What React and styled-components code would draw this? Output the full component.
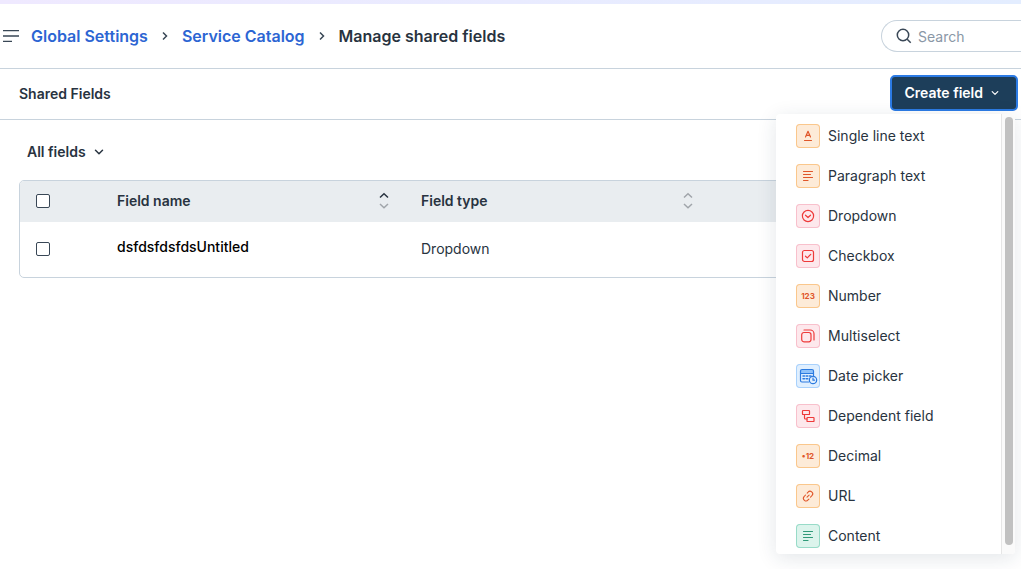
import React, { useState } from 'react';
import styled, { createGlobalStyle } from 'styled-components';

const GlobalStyle = createGlobalStyle`
  * {
    box-sizing: border-box;
  }

  body {
    margin: 0;
    min-height: 100vh;
    background: #fff;
    color: #283340;
    font-family: Inter, 'Liberation Sans', sans-serif;
    font-size: 14px;
    line-height: 20px;
    overflow-x: hidden;
  }

  button, input {
    font: inherit;
    color: inherit;
  }
`;

const tones = {
  orange: { background: '#fdebd8', border: '#fac78c', color: '#e0562a' },
  red: { background: '#fde8ec', border: '#f8c0cc', color: '#ee3a3a' },
  blue: { background: '#e0effe', border: '#a8d1fc', color: '#2c7be0' },
  green: { background: '#dcf4ec', border: '#98dbc8', color: '#2f9a78' },
};

const ParagraphLines = () => (
  <path d="M7.5 7.5h9M7.5 10.5h7M7.5 13.5h9M7.5 16.5h4.5" />
);

const fieldTypes = [
  {
    label: 'Single line text',
    tone: 'orange',
    icon: <path d="M9.5 13 12 7.3l2.5 5.7M10.3 11.3h3.4M8.5 16.5h7" />,
  },
  { label: 'Paragraph text', tone: 'orange', icon: <ParagraphLines /> },
  {
    label: 'Dropdown',
    tone: 'red',
    icon: (
      <>
        <circle cx="12" cy="12" r="5.6" />
        <path d="m9.5 11.2 2.5 2.3 2.5-2.3" />
      </>
    ),
  },
  {
    label: 'Checkbox',
    tone: 'red',
    icon: (
      <>
        <rect x="6.5" y="6.5" width="11" height="11" rx="2" />
        <path d="m9.5 12.2 1.8 1.7 3.4-3.6" />
      </>
    ),
  },
  { label: 'Number', tone: 'orange', text: '123' },
  {
    label: 'Multiselect',
    tone: 'red',
    icon: (
      <>
        <rect x="5.7" y="8.5" width="9.3" height="9.3" rx="2.2" />
        <path d="M8 6h6.2a3.8 3.8 0 0 1 3.8 3.8V16" />
      </>
    ),
  },
  {
    label: 'Date picker',
    tone: 'blue',
    icon: (
      <>
        <path d="M4.5 6h13v3h-13z" fill="#8fc2fa" stroke="none" />
        <path d="M12.5 18H6a1.5 1.5 0 0 1-1.5-1.5V7A1.5 1.5 0 0 1 6 5.5h10A1.5 1.5 0 0 1 17.500 7v5M4.500 9.500h13" />
        <path d="M7 12h1.500M10.200 12h1.600M13.500 12H15M7 14.700h1.500M10.200 14.700h1.600" strokeWidth="1.5" />
        <circle cx="17" cy="16" r="3.7" fill="#e0effe" />
        <path d="M17 14v2.200h1.600" />
      </>
    ),
  },
  {
    label: 'Dependent field',
    tone: 'red',
    icon: (
      <>
        <rect x="6.5" y="6.5" width="7" height="4" rx="0.6" />
        <rect x="11" y="13.5" width="7" height="4" rx="0.6" />
        <path d="M8.5 10.5V14a1 1 0 0 0 1 1H11" />
      </>
    ),
  },
  { label: 'Decimal', tone: 'orange', text: '•12' },
  {
    label: 'URL',
    tone: 'orange',
    icon: (
      <g transform="translate(1.5 1.5) scale(0.88)">
        <path d="m11 8.600 1-1a2.900 2.900 0 0 1 4.600 3.700l-1.800 1.900" />
        <path d="m13 15.400-1 1a2.900 2.900 0 0 1-4.600-3.700l1.800-1.900" />
        <path d="m10.800 13.200 2.400-2.400" />
      </g>
    ),
  },
  { label: 'Content', tone: 'green', icon: <ParagraphLines /> },
];

const rows = [{ id: 1, name: 'dsfdsfdsfdsUntitled', type: 'Dropdown' }];

const ChevronRight = () => (
  <svg width="6" height="10" viewBox="0 0 6 10" fill="none" stroke="#394756" strokeWidth="1.5">
    <path d="m1 1.5 3.5 3.5L1 8.5" />
  </svg>
);

const ChevronDown = ({ size = 10 }) => (
  <svg width={size} height={size} viewBox="0 0 10 10" fill="none" stroke="currentColor" strokeWidth="1.5" strokeLinecap="round" strokeLinejoin="round">
    <path d="M1.5 3.3 5 6.7l3.5-3.4" />
  </svg>
);

const SortIcon = ({ ascending }) => (
  <svg width="10" height="18" viewBox="0 0 10 18" fill="none" strokeWidth="1.5">
    <path d="m1 5.5 4-3.7 4 3.7" stroke={ascending ? '#283340' : '#a0a5aa'} />
    <path d="m1 12 4 3.700 4-3.700" stroke="#a0a5aa" />
  </svg>
);

const App = () => {
  const [isOpen, setIsOpen] = useState(true);

  return (
    <>
      <GlobalStyle />
      <TopStrip />
      <Header>
        <MenuButton type="button" aria-label="Menu">
          <svg width="16" height="12" viewBox="0 0 16 12" fill="none" stroke="#394756" strokeWidth="1.3">
            <path d="M0 .7h16M0 6h16M0 11.300h9" />
          </svg>
        </MenuButton>
        <Breadcrumb aria-label="Breadcrumb">
          <a href="#settings">Global Settings</a>
          <ChevronRight />
          <a href="#catalog">Service Catalog</a>
          <ChevronRight />
          <span>Manage shared fields</span>
        </Breadcrumb>
        <SearchBox>
          <svg width="16" height="16" viewBox="0 0 16 16" fill="none" stroke="#394756" strokeWidth="1.5">
            <circle cx="7" cy="7" r="5.7" />
            <path d="m11.2 11.2 3.5 3.5" />
          </svg>
          <input type="search" placeholder="Search" aria-label="Search" />
        </SearchBox>
      </Header>

      <Toolbar>
        <Title>Shared Fields</Title>
        <CreateWrapper>
          <CreateButton type="button" aria-expanded={isOpen} onClick={() => setIsOpen(!isOpen)}>
            Create field
            <ChevronDown size={8} />
          </CreateButton>
          {isOpen && (
            <Menu>
              <MenuList>
                {fieldTypes.map(({ label, tone, icon, text }) => (
                  <li key={label}>
                    <MenuItem type="button">
                      <FieldIcon $tone={tones[tone]} aria-hidden="true">
                        {text ? (
                          <text x="12" y="15" textAnchor="middle">
                            {text}
                          </text>
                        ) : (
                          icon
                        )}
                      </FieldIcon>
                      {label}
                    </MenuItem>
                  </li>
                ))}
              </MenuList>
              <ScrollTrack>
                <ScrollThumb />
              </ScrollTrack>
            </Menu>
          )}
        </CreateWrapper>
      </Toolbar>

      <Main>
        <FilterButton type="button">
          All fields
          <ChevronDown />
        </FilterButton>
        <TableFrame>
          <Table>
            <colgroup>
              <SelectCol />
              <FieldCol />
              <FieldCol />
              <col />
            </colgroup>
            <thead>
              <tr>
                <th>
                  <Checkbox type="checkbox" aria-label="Select all fields" />
                </th>
                <th>
                  <SortButton type="button">
                    Field name
                    <SortIcon ascending />
                  </SortButton>
                </th>
                <th>
                  <SortButton type="button">
                    Field type
                    <SortIcon />
                  </SortButton>
                </th>
                <th />
              </tr>
            </thead>
            <tbody>
              {rows.map((row) => (
                <tr key={row.id}>
                  <td>
                    <Checkbox type="checkbox" aria-label={`Select ${row.name}`} />
                  </td>
                  <td>
                    <FieldName>{row.name}</FieldName>
                  </td>
                  <td>{row.type}</td>
                  <td />
                </tr>
              ))}
            </tbody>
          </Table>
        </TableFrame>
      </Main>
    </>
  );
};

const TopStrip = styled.div`
  height: 4px;
  background: linear-gradient(90deg, #efe9ff, #e3edff);
`;

const Header = styled.header`
  display: flex;
  align-items: center;
  height: 65px;
  padding-left: 3px;
  border-bottom: 1px solid #c8d3dd;
`;

const MenuButton = styled.button`
  display: flex;
  padding: 0;
  border: 0;
  background: none;
`;

const Breadcrumb = styled.nav`
  display: flex;
  flex: 1;
  align-items: center;
  gap: 14px;
  margin-left: 12px;
  font-size: 16px;
  font-weight: 600;
  white-space: nowrap;

  & a {
    color: #2c65d3;
    text-decoration: none;
  }
`;

const SearchBox = styled.label`
  display: flex;
  align-items: center;
  gap: 6px;
  width: 140px;
  height: 32px;
  padding-left: 14px;
  border: 1px solid #c8d3dd;
  border-right: 0;
  border-radius: 16px 0 0 16px;

  & svg {
    flex-shrink: 0;
  }

  & input {
    width: 100%;
    min-width: 0;
    padding: 2px 0 0;
    border: 0;
    outline: 0;
    background: none;
  }

  & input::placeholder {
    color: #8a97a6;
  }
`;

const Toolbar = styled.div`
  display: flex;
  align-items: center;
  justify-content: space-between;
  height: 51px;
  padding: 0 3px 0 19px;
  border-bottom: 1px solid #c8d3dd;
`;

const Title = styled.h1`
  margin: 0;
  font-size: 14px;
  font-weight: 600;
`;

const CreateWrapper = styled.div`
  position: relative;
  margin-bottom: 2px;
`;

const CreateButton = styled.button`
  display: flex;
  align-items: center;
  gap: 8px;
  height: 36px;
  padding: 0 17px 0 13px;
  border: 2px solid #2c7be5;
  border-radius: 5px;
  background: #1d3e5a;
  color: #fff;
  font-weight: 600;
`;

const Menu = styled.div`
  position: absolute;
  top: 39px;
  right: 3px;
  display: flex;
  width: 239px;
  height: 440px;
  border-radius: 4px;
  background: #fff;
  box-shadow: 0 4px 20px rgba(24, 50, 71, 0.12);
  overflow: hidden;
`;

const MenuList = styled.ul`
  flex: 1;
  margin: 0;
  padding: 2px 0 0;
  list-style: none;
`;

const MenuItem = styled.button`
  display: flex;
  align-items: center;
  gap: 8px;
  width: 100%;
  height: 40px;
  padding: 0 20px;
  border: 0;
  background: none;
  text-align: left;

  &:hover {
    background: #f5f7f9;
  }
`;

const FieldIcon = styled.svg.attrs({ viewBox: '0 0 24 24' })`
  width: 24px;
  height: 24px;
  border-radius: 4px;
  background: ${({ $tone }) => $tone.background};
  box-shadow: inset 0 0 0 1px ${({ $tone }) => $tone.border};
  fill: none;
  stroke: ${({ $tone }) => $tone.color};
  stroke-width: 1.2;
  stroke-linecap: round;
  stroke-linejoin: round;

  & text {
    fill: ${({ $tone }) => $tone.color};
    stroke: none;
    font-size: 8px;
    font-weight: 700;
  }
`;

const ScrollTrack = styled.div`
  width: 14px;
  padding: 3px 2px 9px 3px;
  border-left: 1px solid #e6e6e6;
  background: #fafafa;
`;

const ScrollThumb = styled.div`
  height: 100%;
  border-radius: 4px;
  background: #c1c1c1;
`;

const Main = styled.main`
  padding: 20px 20px 0 19px;
`;

const FilterButton = styled.button`
  display: flex;
  align-items: center;
  gap: 8px;
  height: 24px;
  margin-bottom: 16px;
  padding: 0 8px;
  border: 0;
  background: none;
  font-weight: 600;
`;

const TableFrame = styled.div`
  border: 1px solid #c8d3dd;
  border-radius: 5px;
  overflow: hidden;
`;

const Table = styled.table`
  width: 100%;
  table-layout: fixed;
  border-collapse: collapse;
  text-align: left;

  & th {
    height: 41px;
    padding: 0 16px 2px;
    background: #e9edf0;
  }

  & td {
    height: 55px;
    padding: 0 16px 2px;
  }
`;

const SelectCol = styled.col`
  width: 81px;
`;

const FieldCol = styled.col`
  width: 304px;
`;

const SortButton = styled.button`
  display: flex;
  align-items: center;
  justify-content: space-between;
  width: 100%;
  padding: 0;
  border: 0;
  background: none;
  font-weight: 600;
`;

const Checkbox = styled.input`
  display: block;
  width: 14px;
  height: 14px;
  margin: 0;
  appearance: none;
  border: 1px solid #394756;
  border-radius: 2px;
  background: #fff;

  &:checked {
    background: #2c65d3;
  }
`;

const FieldName = styled.div`
  padding-bottom: 4px;
  color: #000;
  font-weight: 500;
`;

export default App;
